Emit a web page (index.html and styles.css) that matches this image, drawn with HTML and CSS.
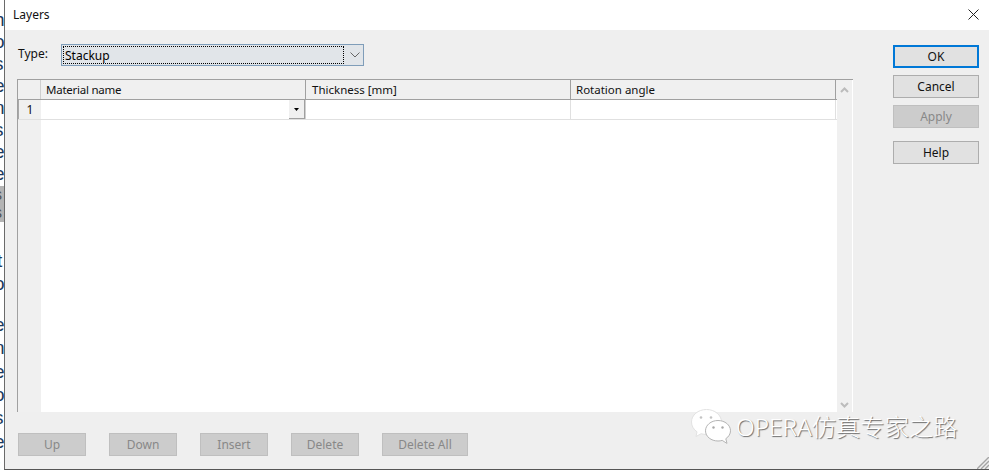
FILE: index.html
```html
<!DOCTYPE html>
<html lang="en">
<head>
<meta charset="utf-8">
<title>Layers</title>
<link rel="stylesheet" href="styles.css">
</head>
<body>
<div class="behind">
  <span class="frag">h</span><span class="frag">o</span><span class="frag">s</span><span class="frag">e</span><span class="frag">n</span><span class="frag">s</span><span class="frag">e</span><span class="frag">e</span>
  <span class="frag sel top">s</span><span class="frag sel">s</span>
  <span class="frag low first">t</span><span class="frag low">o</span>
  <span class="frag low gap">e</span><span class="frag low">n</span><span class="frag low">e</span><span class="frag low">o</span><span class="frag low">s</span><span class="frag low">e</span>
  <span class="frag tick">:</span>
</div>
<main class="dialog">
  <header class="titlebar">
    <span class="title">Layers</span>
    <svg class="close" width="11" height="11" viewBox="0 0 11 11"><path d="M.5.5l10 10M10.500.5l-10 10" stroke="#222" fill="none"/></svg>
  </header>
  <div class="client">
    <section class="left">
      <div class="type-row">
        <label class="type-label">Type:</label>
        <div class="combo">
          <span class="combo-value">Stackup</span>
          <svg class="chev" width="10" height="6" viewBox="0 0 10 6"><path d="M.5.500l4.500 4.500 4.500-4.500" stroke="#666" fill="none"/></svg>
        </div>
      </div>
      <div class="grid">
        <div class="table">
          <div class="row head">
            <div class="cell corner"></div>
            <div class="cell c1">Material name</div>
            <div class="cell c2">Thickness [mm]</div>
            <div class="cell c3">Rotation angle</div>
          </div>
          <div class="row body-row">
            <div class="cell num">1</div>
            <div class="cell c1 drop"><span class="drop-btn"><svg width="5" height="3" viewBox="0 0 5 3"><path d="M0 0h5L2.500 3z" fill="#000"/></svg></span></div>
            <div class="cell c2"></div>
            <div class="cell c3"></div>
          </div>
          <div class="rest"><div class="rest-gutter"></div></div>
        </div>
        <div class="scroll">
          <svg width="9" height="6" viewBox="0 0 9 6"><path d="M1 5l3.500-3.500L8 5" stroke="#bcbcbc" stroke-width="2" fill="none"/></svg>
          <svg width="9" height="6" viewBox="0 0 9 6"><path d="M1 1l3.500 3.500L8 1" stroke="#bcbcbc" stroke-width="2" fill="none"/></svg>
        </div>
      </div>
      <div class="actions">
        <button class="btn off a-s">Up</button>
        <button class="btn off a-s">Down</button>
        <button class="btn off a-s">Insert</button>
        <button class="btn off a-s">Delete</button>
        <button class="btn off a-l">Delete All</button>
      </div>
    </section>
    <aside class="side">
      <button class="btn def">OK</button>
      <button class="btn">Cancel</button>
      <button class="btn off">Apply</button>
      <button class="btn help">Help</button>
    </aside>
    <div class="mark">
      <svg width="40" height="35" viewBox="0 0 40 35">
        <path d="M15.500.500C7.200.500.500 6 .500 13c0 4 2.200 7.500 5.500 9.800L5 27.500l5.200-2.800c1.700.5 3.400.8 5.300.8 8.300 0 15-5.600 15-12.500S23.800.500 15.500.500z" fill="#fff" stroke="#e2e2e2"/>
        <path d="M27 11.500c-6.900 0-12.500 4.600-12.500 10.300S20.100 32 27 32c1.500 0 2.900-.2 4.200-.6l4.800 3-1.200-4.700c2.900-1.900 4.700-4.800 4.700-7.900 0-5.700-5.600-10.300-12.500-10.300z" fill="#fff" stroke="#b4b4b4"/>
        <circle cx="10" cy="8.500" r="1.300" fill="#c4c4c4"/><circle cx="20" cy="8.500" r="1.300" fill="#c4c4c4"/>
        <circle cx="22.500" cy="18.500" r="1.200" fill="#a8a8a8"/><circle cx="31.500" cy="18.500" r="1.200" fill="#a8a8a8"/>
      </svg>
      <span class="mark-text">OPERA仿真专家之路</span>
    </div>
    <svg class="grip" width="12" height="12" viewBox="0 0 12 12"><path d="M0 12L12 0M4 12l8-8M8 12l4-4" stroke="#a4a4a4" stroke-width="1.400" fill="none"/></svg>
  </div>
</main>
</body>
</html>
```
FILE: styles.css
```css
* { box-sizing: border-box; }
html, body { margin: 0; height: 100%; }
body {
  display: flex;
  width: 989px;
  height: 470px;
  overflow: hidden;
  background: #fff;
  font-family: "Noto Sans", "Noto Sans CJK SC", sans-serif;
  font-size: 12px;
  color: #000;
}
.behind {
  width: 4px;
  flex: none;
  overflow: hidden;
  display: flex;
  flex-direction: column;
  padding-top: 9px;
  font-family: "Liberation Sans", sans-serif;
  font-size: 19px;
}
.frag {
  display: block;
  flex: none;
  width: 20px;
  height: 22px;
  line-height: 22px;
  margin-left: -6px;
  color: #1c3a5c;
}
.frag.sel { height: 18px; line-height: 18px; font-size: 16px; background: #b4b4b4; color: #555; }
.frag.top { margin-top: 1px; }
.frag.low { height: 23.400px; line-height: 23.400px; }
.frag.first { margin-top: 27px; margin-left: -3px; }
.frag.gap { margin-top: 17px; }
.frag.tick { color: #7cc4f0; margin-left: -3px; margin-top: 1px; font-size: 14px; }
.dialog {
  flex: 1;
  display: flex;
  flex-direction: column;
  border-left: 1px solid #6a6a6a;
  border-bottom: 1px solid #555;
  background: #f0f0f0;
}
.titlebar {
  height: 30px;
  flex: none;
  background: #fff;
  display: flex;
  align-items: center;
  justify-content: space-between;
  padding: 0 10px 0 8px;
}
.title { font-size: 12px; color: #111; margin-bottom: 1px; }
.close { margin-bottom: 1px; }
.client { position: relative; flex: 1; display: flex; min-height: 0; background: #efefef; }
.left { width: 848px; flex: none; padding: 14px 0 0 12px; display: flex; flex-direction: column; }
.type-row { display: flex; align-items: flex-start; height: 35px; }
.type-label { width: 44px; padding: 1px 0 0 1px; line-height: 17px; color: #111; }
.combo {
  width: 303px;
  height: 22px;
  border: 1px solid #7f9db9;
  background: #e1e5e9;
  display: flex;
  align-items: center;
}
.combo-value {
  width: 281px;
  height: 18px;
  margin-left: 1px;
  padding-left: 1px;
  line-height: 17px;
  border: 1px dotted #000;
}
.chev { margin-left: 6px; }
.grid {
  display: flex;
  width: 836px;
  height: 333px;
  border-top: 1px solid #a0a0a0;
  border-left: 1px solid #a0a0a0;
  background: #fff;
}
.table { width: 819px; flex: none; display: flex; flex-direction: column; }
.row { display: flex; flex: none; }
.head { height: 20px; border-bottom: 1px solid #a0a0a0; background: #f0f0f0; font-size: 11.500px; }
.body-row { height: 20px; border-bottom: 1px solid #e0e0e0; }
.cell { height: 100%; line-height: 19px; color: #111; }
.corner, .num { width: 23px; flex: none; background: #f0f0f0; }
.corner { border-right: 1px solid #cfcfcf; }
.num { text-align: center; border-left: 1px solid #a8a8a8; }
.c1 { width: 265px; padding-left: 5px; border-right: 1px solid #d0d0d0; }
.c2 { width: 265px; padding-left: 6px; border-right: 1px solid #e0e0e0; }
.c3 { width: 265px; padding-left: 5px; border-right: 1px solid #e0e0e0; }
.head .c1 { letter-spacing: -.25px; }
.head .c1, .head .c2, .head .c3 { border-right-color: #a0a0a0; }
.drop { display: flex; justify-content: flex-end; padding: 0; }
.drop-btn {
  width: 16px;
  height: 19px;
  background: #f0f0f0;
  border-right: 1px solid #a0a0a0;
  border-bottom: 1px solid #a0a0a0;
  display: flex;
  align-items: center;
  justify-content: center;
}
.rest { flex: 1; display: flex; }
.rest-gutter { width: 23px; background: #f0f0f0; }
.scroll {
  flex: 1;
  background: #f0f0f0;
  border-right: 1px solid #fff;
  display: flex;
  flex-direction: column;
  align-items: center;
  justify-content: space-between;
  padding: 7px 0 4px;
}
.actions { display: flex; gap: 23px; margin: 21px 0 0 1px; }
.btn {
  height: 23px;
  width: 86px;
  padding: 0 0 1px;
  border: 1px solid #adadad;
  background: #e1e1e1;
  font: inherit;
  color: #111;
  border-radius: 0;
  display: block;
}
.btn.off { background: #ccc; border-color: #bfbfbf; color: #888; }
.a-s { width: 68px; }
.a-l { width: 86px; }
.side { flex: none; padding: 15px 0 0 40px; display: flex; flex-direction: column; gap: 7px; }
.btn.def { border: 2px solid #0078d7; }
.help { margin-top: 6px; }
.mark {
  position: absolute;
  left: 686px;
  top: 379px;
  display: flex;
  align-items: center;
  gap: 5px;
  pointer-events: none;
}
.mark-text {
  font-size: 24.300px;
  font-weight: 300;
  line-height: 32px;
  margin-top: 1px;
  color: #fff;
  text-shadow: 1px 1px 1px #6a6a6a;
}
.grip { position: absolute; right: 0; bottom: 0; }
```
